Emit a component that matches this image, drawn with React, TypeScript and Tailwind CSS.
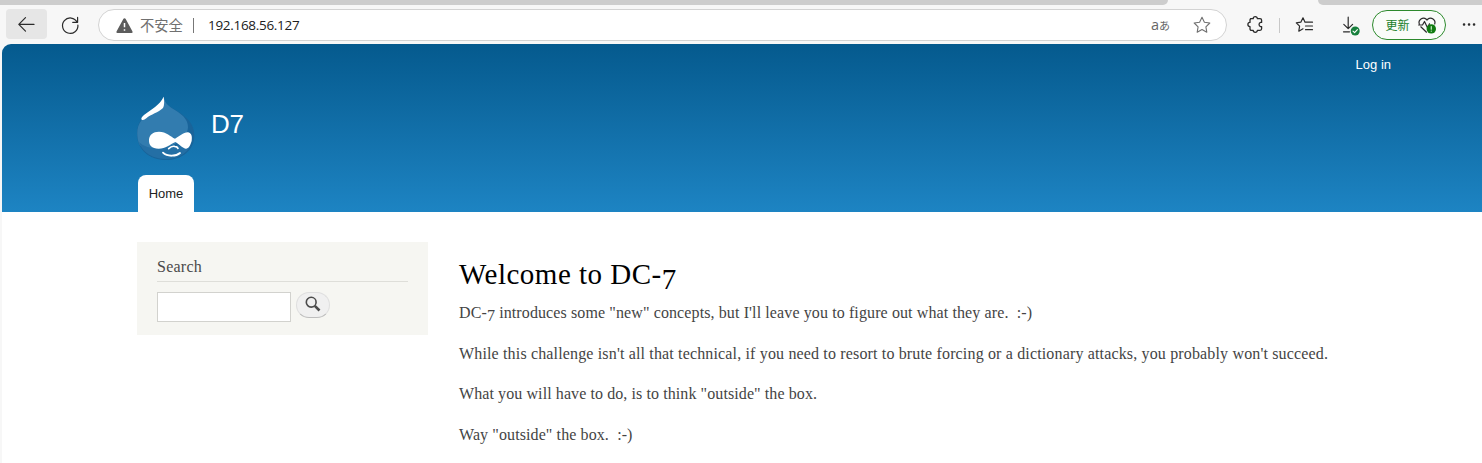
import type { ReactNode } from "react";

function Icon({ className, viewBox = "0 0 20 20", children }: { className: string; viewBox?: string; children: ReactNode }) {
  return (
    <svg className={className} viewBox={viewBox} fill="none" stroke="currentColor" strokeWidth="1.2" strokeLinecap="round" strokeLinejoin="round">
      {children}
    </svg>
  );
}

const STAR = "M10 2.3 L12.4 7.3 L17.8 8 L13.9 11.8 L14.8 17.2 L10 14.6 L5.2 17.2 L6.1 11.8 L2.2 8 L7.6 7.3 Z";

function Toolbar() {
  return (
    <div className="flex h-[39px] items-start pl-[6px] pt-[4px] text-[#2b2b2b]">
      <button className="flex h-[30px] w-[41px] items-center justify-center rounded-[4px] bg-[#e6e6e6]">
        <Icon className="h-5 w-5">
          <path d="M17 10.4H2M8.5 3.7 1.8 10.4 8.5 17.1" />
        </Icon>
      </button>
      <Icon className="ml-[13px] mt-[6px] h-5 w-5">
        <path d="M17.1 7.2A7.7 7.7 0 1 0 17.9 10M17.6 2.4V7.3H12.7" />
      </Icon>
      <div className="ml-[18px] flex h-[32px] w-[1129px] shrink-0 items-center rounded-full border border-[#d3d3d3] bg-white">
        <svg className="ml-[17px] h-[15px] w-[17px]" viewBox="0 0 17 15">
          <path d="M8.5 .2 Q9.3 .2 9.7 1 L16.5 13.4 Q17 15 15.5 15 H1.5 Q0 15 .5 13.4 L7.3 1 Q7.7 .2 8.5 .2Z" fill="#5c5c5c" />
          <path d="M8.5 5v4.3M8.5 11.2v1.5" stroke="white" strokeWidth="1.5" />
        </svg>
        <span className="ml-[7px] w-[43px] whitespace-nowrap text-[14.3px] leading-5 text-[#707070]">不安全</span>
        <span className="ml-[10px] h-[15px] w-px bg-[#777]" />
        <span className="ml-[14px] font-['Open_Sans','Noto_Sans_CJK_SC',sans-serif] text-[13.5px] leading-5 tracking-[-0.3px] text-[#202020]">192.168.56.127</span>
        <span className="ml-auto mr-[22px] flex items-baseline leading-5 text-[#666]">
          <span className="font-['Open_Sans',sans-serif] text-[14.5px]">a</span>
          <span className="text-[11px]">あ</span>
        </span>
        <Icon className="mr-[14px] h-5 w-5 text-[#707070]">
          <path d={STAR} strokeWidth="1.1" />
        </Icon>
      </div>
      <Icon className="ml-[18px] mt-[5px] h-5 w-5">
        <path strokeWidth="1.3" d="M5.5 4.7H8.2A2.1 2.1 0 0 1 12.4 4.7H15Q16.6 4.7 16.6 6.2V8.4H15.6A2.2 2.2 0 0 0 15.6 12.6H16.6V14.8Q16.6 16.3 15 16.3H12.4A2.1 2.1 0 0 1 8.2 16.3H6.5Q5 16.3 5 14.8V12.6A2.1 2.1 0 0 1 5 8.4V6.2Q5 4.7 6.5 4.7Z" />
      </Icon>
      <span className="ml-[14px] mt-[9px] h-[15px] w-px bg-[#c8c8c8]" />
      <Icon className="ml-[15px] mt-[6px] h-5 w-5">
        <path d="M10 7.2 8 2.8 5.8 7.2 1.3 7.8 4.6 11.1 3.8 16.2 8 13.8M10 7.2H17.5M10.5 11H17.5M10.5 14.7H17.5" />
      </Icon>
      <Icon className="ml-[26px] mt-[5px] h-[22px] w-5" viewBox="0 0 20 22">
        <path d="M7.2 3.2V14.5M2.8 10.3 7.2 14.7 11.6 10.3M2.5 17.8H8.5" />
        <circle cx="14.2" cy="17" r="4.5" fill="#17803d" stroke="none" />
        <path d="M12 17.1 13.6 18.6 16.4 15.6" stroke="white" strokeWidth="1.1" />
      </Icon>
      <button className="ml-[11px] mt-[1px] flex h-[30px] w-[74px] shrink-0 items-center rounded-full border border-[#2c8a2c] bg-[#f9fcf9] text-[#20802a]">
        <span className="ml-[12px] w-[25px] whitespace-nowrap text-[12px] leading-5">更新</span>
        <Icon className="ml-[7px] h-5 w-5 text-[#2b2b2b]">
          <path d="M2.3 9A4.4 4.4 0 0 1 9.3 4.2L10 5 10.7 4.2A4.4 4.4 0 0 1 17.7 9M3.8 11.8 9.5 17.2M1.7 10H5.5L7.5 6.5 10.5 12.8 12.5 8.8" />
          <circle cx="14.3" cy="13.9" r="4.7" fill="#107c10" stroke="none" />
          <path d="M14.3 11.6V14.2M14.3 16.1V16.2" stroke="#bfe5bf" strokeWidth="1.3" />
        </Icon>
      </button>
      <Icon className="ml-[13px] mt-[6px] h-5 w-5 shrink-0" viewBox="0 0 20 20">
        <path d="M5 9.5h.1M10 9.5h.1M15 9.5h.1" strokeWidth="2.5" />
      </Icon>
    </div>
  );
}

function DropLogo() {
  return (
    <svg className="h-[64px] w-[58px]" viewBox="0 0 174 192">
      <path d="M80 0C83 27 104 34 126 49C153 67 172 86 172 119C172 163 133 192 87 192C39 192 0 162 0 113C0 75 22 58 47 43C67 31 77 18 80 0Z" fill="#19649a" />
      <path d="M80 1C83 28 103 35 124 49C140 60 153 74 153 94C151 132 103 155 61 160C35 164 14 158 6 143C-9 94 9 67 47 44C67 32 76 19 80 1Z" fill="#327caf" />
      <path d="M5 138C36 164 77 160 105 147L161 150C144 179 115 189 87 189C47 189 17 170 5 138Z" fill="#246fa5" />
      <path d="M80 2Q84 24 78 36C64 50 42 54 28 67Q19 75 14 71Q10 67 21 57C43 40 68 28 80 2Z" fill="white" />
      <path d="M66 107C88 107 101 122 114 128C126 122 139 109 152 109C164 110 166 122 164 135C160 149 154 159 146 158C135 156 126 144 115 138C99 145 86 158 65 158C44 158 35 147 36 131C37 116 48 107 66 107Z" fill="white" />
      <path d="M95 158Q104 149 113 151Q121 152 123 157" fill="none" stroke="white" strokeWidth="5" strokeLinecap="round" />
      <path d="M78 170C91 183 118 181 129 171" fill="none" stroke="white" strokeWidth="5.5" strokeLinecap="round" />
    </svg>
  );
}

function Header() {
  return (
    <header className="ml-[2px] h-[168px] rounded-tl-[9px] bg-linear-to-b from-[#055a8e] to-[#1d84c3] pl-[135px] font-['Liberation_Sans',sans-serif]">
      <div className="flex h-[52px] justify-end pr-[91px] pt-[11px] text-[13px] leading-5 text-white">
        <a>Log in</a>
      </div>
      <div className="flex h-[79px] items-start">
        <DropLogo />
        <h1 className="ml-[16px] mt-[12px] text-[26px] leading-8 tracking-[-0.4px] text-white">D7</h1>
      </div>
      <nav className="ml-[1px] flex h-[37px] w-[56px] justify-center rounded-t-[8px] bg-white pt-[9px] text-[13px] leading-5 text-[#222]">
        <a>Home</a>
      </nav>
    </header>
  );
}

function Low({ children }: { children: ReactNode }) {
  return <span className="relative top-[0.17em]">{children}</span>;
}

function SearchBlock() {
  return (
    <aside className="mt-[30px] h-[93px] w-[291px] bg-[#f6f6f2] px-5 pt-[14px]">
      <h2 className="h-[26px] border-b border-[#deded9] text-[16px] leading-[22px] tracking-[0.25px] text-[#4a4a4a]">Search</h2>
      <div className="mt-[10px] flex items-start gap-[5px]">
        <input className="h-[30px] w-[134px] border border-[#d2d2ce] bg-white" aria-label="Search" />
        <button className="flex h-[26px] w-[34px] justify-center rounded-full border border-[#dfdfdf] border-b-[#bdbdbd] bg-[#f0f0f0] pt-[3px]">
          <svg className="h-4 w-4" viewBox="0 0 16 16" fill="none" stroke="#4b4b4b">
            <circle cx="6.2" cy="6.2" r="4.9" strokeWidth="1.6" />
            <path d="M9.8 9.8 14.5 14.5" strokeWidth="2.6" />
          </svg>
        </button>
      </div>
    </aside>
  );
}

function Article() {
  return (
    <article className="ml-[31px] flex-1 whitespace-pre pt-[44px] text-[16px] leading-[20px] text-[#444]">
      <h2 className="h-[47px] text-[29px] leading-[36px] tracking-[0.5px] text-black">Welcome to DC-<Low>7</Low></h2>
      <div className="flex flex-col gap-[20.5px]">
        <p className="tracking-[0.11px]">DC-<Low>7</Low> introduces some "new" concepts, but I'll leave you to figure out what they are.  :-)</p>
        <p className="tracking-[0.155px]">While this challenge isn't all that technical, if you need to resort to brute forcing or a dictionary attacks, you probably won't succeed.</p>
        <p className="tracking-[0.09px]">What you will have to do, is to think "outside" the box.</p>
        <p className="tracking-[0.1px]">Way "outside" the box.  :-)</p>
      </div>
    </article>
  );
}

export default function App() {
  return (
    <div className="h-[463px] w-[1482px] overflow-hidden bg-[#f7f7f7] font-['Noto_Sans_CJK_SC',sans-serif]">
      <div className="flex h-[5px] justify-between">
        <span className="w-[1168px] rounded-br-[6px] bg-[#cdcdcd]" />
        <span className="w-[164px] rounded-bl-[6px] bg-[#cdcdcd]" />
      </div>
      <Toolbar />
      <Header />
      <main className="ml-[2px] flex h-[251px] bg-white pl-[135px] font-['Liberation_Serif',serif]">
        <SearchBlock />
        <Article />
      </main>
    </div>
  );
}
